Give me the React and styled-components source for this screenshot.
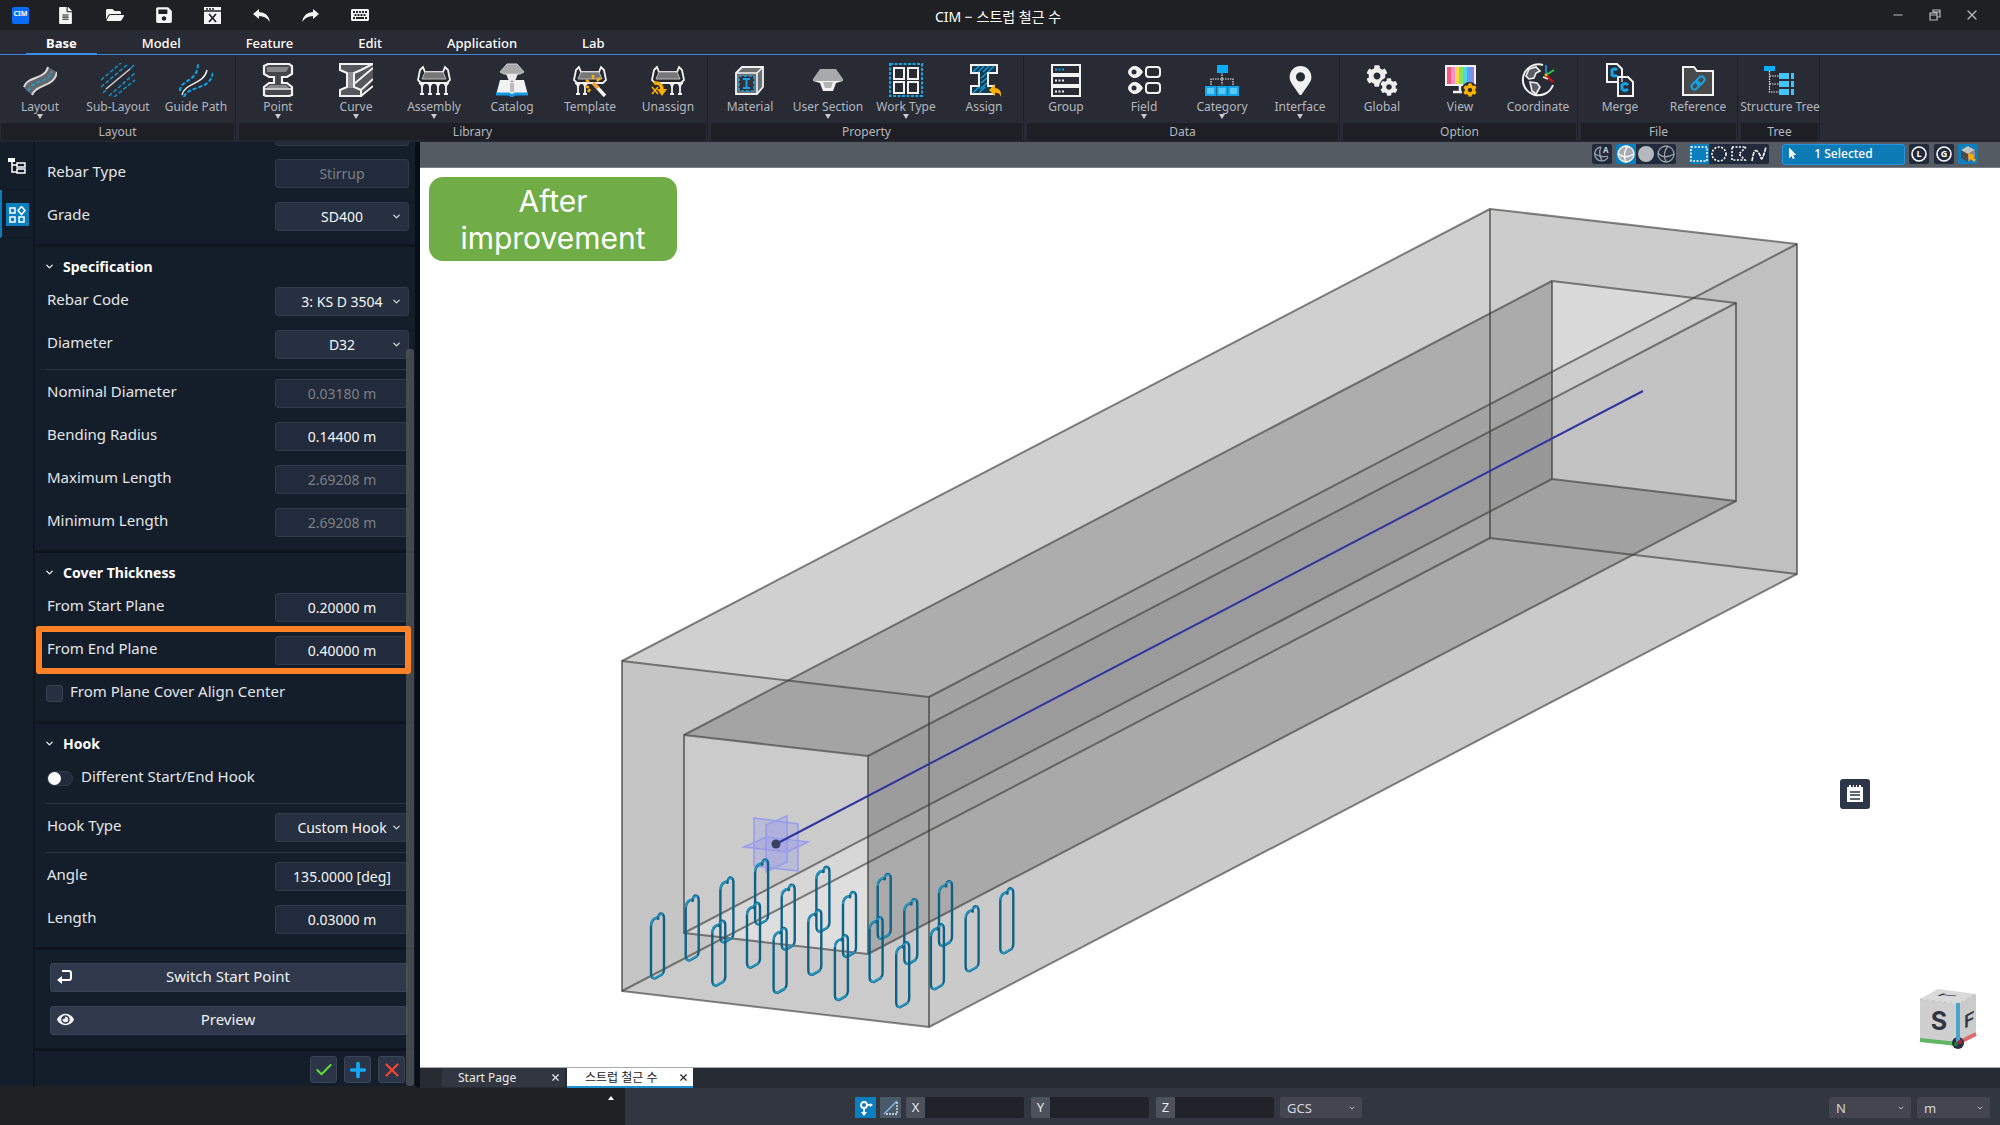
import React from "react";
import styled, { createGlobalStyle, css } from "styled-components";
import {
  FaFileAlt, FaFolderOpen, FaSave, FaKeyboard,
  FaCog, FaMapMarkerAlt, FaEye, FaMousePointer,
} from "react-icons/fa";
import { ChevronDown, X, Check, Plus, Minus } from "lucide-react";

const Global = createGlobalStyle`
  * { box-sizing: border-box; }
  body { margin: 0; background: #202125; }
  body, button, input, select {
    font-family: "Noto Sans", "Noto Sans CJK KR", sans-serif;
  }
  button { border: 0; padding: 0; background: none; color: inherit; cursor: pointer; }
  svg { display: block; flex: none; }
`;

const Page = styled.div`
  display: flex;
  flex-direction: column;
  min-height: 100vh;
  color: #e8eaed;
  font-size: 14px;
`;

/* ---------- title bar ---------- */
const TitleBar = styled.header`
  display: grid;
  grid-template-columns: 1fr auto 1fr;
  align-items: center;
  height: 30px;
  padding: 0 16px 0 12px;
  background: #1f2024;
`;
const QuickBar = styled.div`
  display: flex;
  align-items: center;
  gap: 24px;
`;
const Logo = styled.span`
  width: 17px;
  height: 17px;
  border-radius: 2px;
  background: #0a6cf5;
  color: #fff;
  font-size: 7px;
  font-weight: 700;
  line-height: 13px;
  text-align: center;
`;
const BarButton = styled.button`
  display: flex;
  align-items: center;
  justify-content: center;
  width: 25px;
  height: 24px;
  color: ${(p) => p.$tone || "#f4f4f4"};
`;
const WindowTitle = styled.h1`
  margin: 0;
  font-size: 14px;
  line-height: 20px;
  font-weight: 400;
  color: #fff;
  padding-top: 4px;
`;
const WindowButtons = styled.div`
  display: flex;
  justify-content: flex-end;
  gap: 12px;
`;

/* ---------- menu ---------- */
const Menu = styled.nav`
  display: flex;
  gap: 25px;
  height: 25px;
  padding-left: 26px;
  background: #282b34;
  border-bottom: 1px solid #3a87dc;
`;
const MenuTab = styled.button`
  height: 25px;
  padding: 2px 20px 0;
  font-size: 13px;
  line-height: 20px;
  font-weight: ${(p) => (p.$active ? 700 : 500)};
  color: #fff;
  border-bottom: 2px solid ${(p) => (p.$active ? "#3a8ee8" : "transparent")};
`;

/* ---------- ribbon ---------- */
const Ribbon = styled.div`
  display: flex;
  gap: 4px;
  height: 87px;
  padding: 0 1px;
  background: #282b34;
  border-bottom: 2px solid #23262d;
`;
const RibbonGroup = styled.section`
  display: flex;
  flex-direction: column;
  box-shadow: 2px 0 0 -1px #1d1f26;
`;
const RibbonItems = styled.div`
  display: flex;
  height: 68px;
`;
const RibbonButton = styled.button`
  display: flex;
  flex-direction: column;
  align-items: center;
  width: 78px;
  padding-top: 8px;
  font-size: 12px;
  line-height: 14px;
  color: #b3b7bf;
  white-space: nowrap;
`;
const RibbonLabel = styled.span`
  margin-top: 3px;
`;
const Arrow = styled.span`
  width: 6px;
  height: 5px;
  background: #c8cbd0;
  clip-path: polygon(0 0, 100% 0, 50% 100%);
`;
const RibbonCaption = styled.h2`
  margin: 0 1px 0 0;
  padding-top: 1px;
  background: #1e1f24;
  color: #b3b7bf;
  font-size: 12px;
  line-height: 16px;
  font-weight: 400;
  text-align: center;
`;

/* ---------- work area ---------- */
const Work = styled.main`
  display: flex;
  flex: 1;
`;
const Rail = styled.nav`
  display: flex;
  flex-direction: column;
  width: 35px;
  background: #141e2b;
  border-right: 2px solid #0e151f;
  border-bottom: 2px solid #202125;
`;
const RailButton = styled.button`
  display: flex;
  align-items: center;
  justify-content: center;
  height: 48px;
  padding: 1px 1px 0 0;
  border-left: 2px solid ${(p) => (p.$active ? "#0b7fbd" : "transparent")};
  border-bottom: 1px solid #101824;
`;
const RailTile = styled.span`
  display: flex;
  align-items: center;
  justify-content: center;
  width: 23px;
  height: 23px;
  background: ${(p) => (p.$active ? "#0b7fbd" : "transparent")};
`;
const Panel = styled.aside`
  position: relative;
  display: flex;
  flex-direction: column;
  width: 385px;
  background: #141e2b;
  border-right: 5px solid #080e17;
  border-bottom: 2px solid #202125;
`;
const ScrollThumb = styled.div`
  position: absolute;
  right: 1px;
  top: 207px;
  bottom: 0;
  width: 8px;
  border-radius: 3px;
  background: rgba(84, 85, 87, 0.75);
`;
const Section = styled.section`
  padding-bottom: 6px;
  border-bottom: 3px solid #0e151f;
`;
const SectionTitle = styled.h3`
  display: flex;
  align-items: center;
  gap: 8px;
  height: 33px;
  margin: 0;
  padding: 5px 0 0 9px;
  font-size: 14px;
  font-weight: 700;
  color: #fff;
`;
const Row = styled.div`
  position: relative;
  display: flex;
  align-items: center;
  justify-content: space-between;
  height: 43px;
  padding: 0 6px 0 12px;
`;
const ClippedRow = styled(Row)`
  height: 10px;
  padding-bottom: 6px;
  align-items: flex-end;
  overflow: hidden;
`;
const Highlight = styled.span`
  position: absolute;
  inset: -3px 4px -2px 1px;
  border: 6px solid #ff8126;
  border-radius: 3px;
  pointer-events: none;
  z-index: 2;
`;
const RowLabel = styled.label`
  padding-bottom: 5px;
  font-size: 15px;
  line-height: 20px;
  color: #e3e5e8;
`;
const control = css`
  width: 134px;
  height: 29px;
  padding: 0;
  border: 1px solid #2f3a4b;
  border-radius: 3px;
  background: #222b3b;
  color: #f5f6f7;
  font-size: 14px;
  text-align: center;
`;
const Field = styled.input`
  ${control}
  &:disabled { color: #7b8085; }
`;
const SelectWrap = styled.span`
  position: relative;
  display: flex;
  align-items: center;
  color: #dfe2e6;
  svg { position: absolute; right: 7px; pointer-events: none; }
`;
const Select = styled.select`
  ${control}
  background: #263040;
  appearance: none;
  text-align-last: center;
`;
const Rule = styled.hr`
  height: 1px;
  margin: 3px 5px 2px 10px;
  border: 0;
  background: #2a3443;
`;
const CheckRow = styled(Row)`
  justify-content: flex-start;
  gap: 7px;
  padding-left: 11px;
`;
const CheckBox = styled.input`
  appearance: none;
  width: 17px;
  height: 17px;
  margin: 0;
  border: 1px solid #36404f;
  border-radius: 3px;
  background: #263040;
`;
const Toggle = styled.input`
  appearance: none;
  display: flex;
  width: 26px;
  height: 15px;
  margin: 0 1px;
  border: 1px solid #2f3a4b;
  border-radius: 8px;
  background: #222b3b;
  &::before {
    content: "";
    width: 13px;
    height: 13px;
    border-radius: 50%;
    background: #fff;
  }
`;
const ButtonStack = styled.div`
  display: flex;
  flex-direction: column;
  gap: 14px;
  padding: 13px 7px 13px 15px;
  border-bottom: 3px solid #0e151f;
`;
const WideButton = styled.button`
  display: grid;
  grid-template-columns: 16px 1fr 18px;
  align-items: center;
  height: 29px;
  padding: 0 6px 3px;
  border: 1px solid #38445a;
  border-radius: 3px;
  background: #2f394b;
  font-size: 15px;
  line-height: 20px;
  color: #f0f1f3;
`;
const Actions = styled.div`
  display: flex;
  justify-content: flex-end;
  gap: 7px;
  padding: 5px 10px 3px 0;
`;
const ActionButton = styled.button`
  display: flex;
  align-items: center;
  justify-content: center;
  width: 27px;
  height: 27px;
  border: 1px solid #3a4558;
  border-radius: 3px;
  background: #2b3547;
  color: ${(p) => p.$tone};
`;

/* ---------- viewport ---------- */
const Stage = styled.section`
  display: flex;
  flex-direction: column;
  flex: 1;
  min-width: 0;
`;
const ViewBar = styled.div`
  display: flex;
  justify-content: flex-end;
  height: 26px;
  padding: 2px 22px 3px 0;
  background: #555b63;
  border-bottom: 1px solid #7b8087;
`;
const ToolSet = styled.div`
  display: flex;
  margin-right: ${(p) => p.$gap}px;
  border-radius: 2px;
  overflow: hidden;
  background: #212a3a;
`;
const Tool = styled.button`
  display: flex;
  align-items: center;
  justify-content: center;
  width: 20px;
  height: 20px;
  background: ${(p) => (p.$active ? "#0b7fbd" : "transparent")};
`;
const Selected = styled.button`
  display: grid;
  grid-template-columns: 12px 1fr 12px;
  align-items: center;
  width: 123px;
  height: 21px;
  margin-right: 4px;
  padding: 0 4px 2px;
  border: 1px solid #2495e6;
  border-radius: 3px;
  background: #0d7bb6;
  color: #fff;
  font-size: 12px;
  font-weight: 500;
`;
const Viewport = styled.div`
  position: relative;
  flex: 1;
  background: #fff;
  overflow: hidden;
`;
const Scene = styled.svg`
  position: absolute;
  inset: 0;
  width: 100%;
  height: 100%;
`;
const Badge = styled.div`
  position: absolute;
  left: 9px;
  top: 9px;
  width: 248px;
  padding: 6px 20px 4px;
  border-radius: 14px;
  background: #70ad47;
  color: #fff;
  font-family: Inter, sans-serif;
  font-size: 30px;
  line-height: 37px;
  text-align: center;
`;
const NoteButton = styled.button`
  position: absolute;
  right: 130px;
  top: 611px;
  display: flex;
  align-items: center;
  justify-content: center;
  width: 30px;
  height: 30px;
  border-radius: 3px;
  background: #2b3649;
`;
const NavCube = styled.svg`
  position: absolute;
  right: 22px;
  bottom: 17px;
`;
const DocTabs = styled.div`
  display: flex;
  gap: 2px;
  height: 21px;
  padding-left: 22px;
  background: #272b33;
  border-top: 1px solid #a8abae;
`;
const DocTab = styled.div`
  display: flex;
  align-items: center;
  justify-content: space-between;
  width: ${(p) => (p.$active ? 126 : 123)}px;
  padding: 0 3px 0 ${(p) => (p.$active ? 18 : 16)}px;
  background: ${(p) => (p.$active ? "#fff" : "#313640")};
  color: ${(p) => (p.$active ? "#222" : "#e8eaed")};
  border-bottom: ${(p) => (p.$active ? "2px solid #1c8fcf" : "1px solid #272b33")};
`;
const DocName = styled.button`
  padding-top: 1px;
  font-size: 12px;
  line-height: 16px;
`;
const CloseTab = styled.button`
  display: flex;
  align-items: center;
  justify-content: center;
  width: 14px;
  height: 16px;
`;

/* ---------- status bar ---------- */
const StatusBar = styled.footer`
  display: flex;
  height: 37px;
  background: #313640;
`;
const Message = styled.div`
  display: flex;
  justify-content: flex-end;
  width: 625px;
  padding: 8px 11px 0 0;
  background: #202125;
`;
const UpArrow = styled.button`
  width: 6px;
  height: 4px;
  background: #fff;
  clip-path: polygon(50% 0, 100% 100%, 0 100%);
`;
const StatusItems = styled.div`
  display: flex;
  flex: 1;
  align-items: flex-start;
  padding: 9px 10px 0 230px;
`;
const SnapButton = styled.button`
  display: flex;
  align-items: center;
  justify-content: center;
  width: 21px;
  height: 21px;
  margin-right: 4px;
  background: ${(p) => (p.$active ? "#0b7fbd" : "#4a5b68")};
`;
const Coord = styled.label`
  display: flex;
  margin: 0 6px 0 1px;
  font-size: 13px;
  line-height: 21px;
  text-align: center;
`;
const CoordName = styled.span`
  width: 19px;
  background: #4d515c;
  border-radius: 2px 0 0 2px;
`;
const CoordInput = styled.input`
  width: 99px;
  height: 21px;
  border: 0;
  border-radius: 0 2px 2px 0;
  background: #202329;
  color: #fff;
`;
const Unit = styled.span`
  position: relative;
  display: flex;
  align-items: center;
  margin-left: ${(p) => (p.$gap === "auto" ? "auto" : `${p.$gap}px`)};
  color: #b9bdc4;
  svg { position: absolute; right: 6px; pointer-events: none; }
`;
const UnitSelect = styled.select`
  appearance: none;
  width: ${(p) => p.$width}px;
  height: 21px;
  padding: 0 7px;
  border: 0;
  border-radius: 2px;
  background: #434650;
  color: #d3d6da;
  font-size: 13px;
`;

/* ---------- ribbon drawings ---------- */
const W = "#f2f2f2";
const B = "#12a5ea";
const Icon = ({ children }) => (
  <svg width="34" height="34" viewBox="0 0 34 34" fill="none" stroke={W} strokeWidth="2" aria-hidden="true">
    {children}
  </svg>
);
const IconBox = styled.span`
  display: flex;
  align-items: center;
  justify-content: center;
  width: 34px;
  height: 34px;
  color: #f2f2f2;
`;
const Dish = () => (
  <>
    <path d="M6 4 3 7 1 17 4 20H30L33 17 31 7 28 4 26 9H8Z" fill="#26282e" strokeWidth="1.8" />
    <path d="M8 9H26L29 16H5Z" fill="#777" stroke="#bbb" strokeWidth="1" />
  </>
);
const Legs = ({ xs }) => xs.map((x) => (
  <path key={x} d={`M${x - 3} 20Q${x} 21 ${x} 25V30M${x + 3} 20Q${x} 21 ${x} 25M${x - 2} 31H${x + 2}`} strokeWidth="1.8" />
));
const glyphs = {
  Layout: (
    <Icon>
      <path d="M1 25C4 14 22 17 25 4L34 9C31 24 14 20 9 32Z" fill="#63666b" stroke="none" />
      <path d="M1 24C4 13 22 17 25 4M9 32C14 20 31 25 34 9" stroke="#d9d9d9" />
      <path d="M5 28C10 16 26 21 29 8" stroke="#1aa0d8" strokeWidth="1.6" strokeDasharray="4 2" />
    </Icon>
  ),
  "Sub-Layout": (
    <Icon>
      <path d="M0 17 20 0M0 24 27 1M8 33 34 10M13 34 34 17" stroke="#1291cc" strokeWidth="1.5" strokeDasharray="4 2" />
      <path d="M5 26 29 6" stroke="#c9ccd0" strokeWidth="1.6" />
      <path d="M2 30 5 27M29 6 33 2" stroke="#1291cc" strokeWidth="1.5" />
    </Icon>
  ),
  "Guide Path": (
    <Icon>
      <path d="M1 28C1 16 19 20 19 0M5 34C9 22 32 28 34 9" stroke="#08a8ef" strokeDasharray="4 2" />
      <path d="M3 32C6 19 25 22 28 7" strokeWidth="1.4" />
    </Icon>
  ),
  Point: (
    <Icon>
      <path d="M3 3 7 1H28L31 3V11L26 14H21V20H26L31 24V32L28 33H5L3 32V24L8 20H13V14H8L3 11Z" fill="#44464a" strokeWidth="2.2" />
      <path d="M6 4H28L25 9H6ZM6 24 9 22H25L28 25H6Z" fill="#85878a" stroke="none" />
      <path d="M4 26H30" strokeWidth="1.5" />
    </Icon>
  ),
  Curve: (
    <Icon>
      <path d="M1 1H34V18L22 33H1V27L8 24V10L1 7Z" fill="#55575b" stroke="none" />
      <path d="M34 1H1V7L8 10V24L1 27V33H22V27L15 24V10L22 7 34 1M22 27 34 16M22 33 34 23M15 21 34 5" strokeWidth="2" />
      <path d="M9 9H14V25H9Z" fill="#8c8e91" stroke="none" />
    </Icon>
  ),
  Assembly: <Icon><Dish /><Legs xs={[5, 13, 21, 29]} /></Icon>,
  Catalog: (
    <Icon>
      <path d="M5 9 12 1H22L29 9 25 11H9Z" fill="#a9a9a9" stroke="#d0d0d0" strokeWidth="1" />
      <path d="M11 11H23L20 18H14Z" fill="#e9e9e9" stroke="none" />
      <path d="M1 32 5 17H14L17 19 20 17H29L33 32H20L17 34 14 32Z" fill={W} stroke="none" />
      <path d="M1 31H14L17 33 20 31H33" stroke="#1597e6" strokeWidth="3" />
      <path d="M17 20V29" stroke="#bbb" strokeWidth="4" />
    </Icon>
  ),
  Template: (
    <Icon>
      <Dish /><Legs xs={[5, 12]} />
      <path d="M22 22 32 33" strokeWidth="3.5" />
      <path d="M20 20 25 25" stroke="#ff9d2e" strokeWidth="3.5" />
      <path d="M20 12V16M13 17 16 19M12 24H16M15 29 17 26M27 15 24 18" stroke="#ffb000" strokeWidth="2.5" />
    </Icon>
  ),
  Unassign: (
    <Icon>
      <Dish /><Legs xs={[21, 29]} />
      <path d="M1 24 7 31M7 24 1 31" stroke="#ffb000" strokeWidth="1.6" />
      <path d="M3 20Q11 19 11 27" stroke="#ffb000" strokeWidth="3.5" />
      <path d="M6 26H16L11 33Z" fill="#ffb000" stroke="none" />
    </Icon>
  ),
  Material: (
    <Icon>
      <path d="M3 10 9 4H30V24L24 31H3Z" fill="#6d6f72" strokeWidth="1.8" />
      <path d="M3 10H24V31M24 10 30 4" strokeWidth="1.6" />
      <rect x="6" y="13" width="15" height="15" fill="#303339" stroke={B} strokeWidth="1.6" strokeDasharray="3 2" />
      <path d="M10 16H17M10 25H17M13.5 16V25" stroke={B} strokeWidth="2" />
    </Icon>
  ),
  "User Section": (
    <Icon>
      <path d="M2 16 9 6H25L32 16V18H2Z" fill="#a8a9ab" stroke="none" />
      <path d="M2 18H32L25 20 22 28H12L9 20Z" fill={W} stroke="none" />
      <path d="M12 19H22L20 25H14Z" fill="#b2b3b5" stroke="none" />
    </Icon>
  ),
  "Work Type": (
    <Icon>
      <rect x="1" y="1" width="32" height="32" stroke={B} strokeDasharray="3 1.5" />
      <rect x="5" y="5" width="10" height="11" /><rect x="19" y="5" width="10" height="11" />
      <rect x="5" y="19" width="10" height="11" /><rect x="19" y="19" width="10" height="11" />
    </Icon>
  ),
  Assign: (
    <Icon>
      <path d="M4 2H30V10H21V23H26V31H4V23H12V10H4Z" fill="#153b50" />
      <path d="M6 9 12 3M11 9 17 3M16 9 22 3M21 9 27 3M14 15 20 10M14 20 20 15M13 26 20 20M6 30 12 24M12 30 18 24" stroke={B} strokeWidth="1.3" />
      <path d="M22 27 28 21V25Q35 26 34 34Q32 29 28 30V33Z" fill="#ffb000" stroke="none" />
    </Icon>
  ),
  Group: (
    <Icon>
      {[2, 13, 24].map((y) => (
        <React.Fragment key={y}>
          <rect x="3" y={y} width="28" height="9" />
          <path d={`M6 ${y + 4.5}h9`} stroke={y === 2 ? B : W} strokeDasharray="2 1.5" />
        </React.Fragment>
      ))}
    </Icon>
  ),
  Field: (
    <Icon>
      {[9, 25].map((y) => (
        <React.Fragment key={y}>
          <path d={`M6 ${y - 6}H9Q13 ${y - 5} 16 ${y}Q13 ${y + 5} 9 ${y + 6}H6Q1 ${y + 3} 1 ${y}Q1 ${y - 3} 6 ${y - 6}Z`} fill={W} stroke="none" />
          <circle cx="7" cy={y} r="2.5" fill="#282b34" stroke="none" />
          <rect x="19" y={y - 5} width="14" height="10" rx="3" />
        </React.Fragment>
      ))}
    </Icon>
  ),
  Category: (
    <Icon>
      <path d="M17 9V22M6 22V16H28V22" strokeWidth="1.2" strokeDasharray="1.5 1" />
      <rect x="12" y="2" width="11" height="8" fill="#08aeff" stroke="none" />
      {[1, 12.5, 24].map((x) => <rect key={x} x={x} y="24" width="9" height="8" fill="#59c9f5" stroke={B} />)}
    </Icon>
  ),
  Interface: <IconBox><FaMapMarkerAlt size={29} /></IconBox>,
  Global: (
    <Icon>
      <FaCog x="1" y="2" size={22} color="#eee" stroke="none" />
      <circle cx="24" cy="24" r="10" fill="#282b34" stroke="none" />
      <FaCog x="15" y="15" size={18} color="#eee" stroke="none" />
    </Icon>
  ),
  View: (
    <Icon>
      {["#f4597a", "#f58fd0", "#f9d84a", "#8de05a", "#4fd9e8", "#6a9bf2", "#9a80e8"].map((c, i) => (
        <rect key={c} x={4 + i * 4} y="4" width="4" height="17" fill={c} stroke="none" />
      ))}
      <rect x="3" y="3" width="29" height="19" />
      <path d="M17 22V28M10 29H20" strokeWidth="2.5" />
      <circle cx="26.5" cy="27" r="8" fill="#282b34" stroke="none" />
      <FaCog x="20" y="20" size={14} color="#ffb000" stroke="none" />
    </Icon>
  ),
  Coordinate: (
    <Icon>
      <path d="M22 2A15.5 15.5 0 1 0 32 22" />
      <path d="M8 6 15 4 19 8 15 10 13 15 8 16 5 13ZM9 19 16 20 19 24 15 31 11 28ZM22 14 27 16" fill={W} fillOpacity="0.25" strokeWidth="1.6" />
      <path d="M25 12V2" stroke={B} strokeWidth="1.6" /><path d="M25 12 33 7" stroke="#2ecc40" strokeWidth="1.8" />
      <path d="M25 12 32 19" stroke="#e01010" strokeWidth="2" /><circle cx="25" cy="12" r="1.5" fill="#ffb000" stroke="none" />
    </Icon>
  ),
  Merge: (
    <Icon>
      <path d="M4 1H14L19 6V19H4Z" /><path d="M15 14H25L30 19V33H15Z" fill="#282b34" />
      <path d="M14 7Q12 5 9 7V12Q12 14 14 12M25 22Q22 19 19 22V26Q22 29 25 26" stroke={B} strokeWidth="3" />
      <path d="M14 14H19V19" strokeWidth="1.2" />
    </Icon>
  ),
  Reference: (
    <Icon>
      <path d="M2 4H13L16 8H32V32H2Z" fill="#4a4a4b" />
      <g transform="rotate(-45 17 20)" stroke={B}><rect x="9" y="17" width="9" height="6" rx="3" /><rect x="16" y="17" width="9" height="6" rx="3" /></g>
    </Icon>
  ),
  "Structure Tree": (
    <Icon>
      <rect x="1" y="3" width="11" height="5" fill="#08aeff" stroke="none" />
      <path d="M6.5 8V29H16M6.5 13H16M6.5 21H16" strokeWidth="1.2" strokeDasharray="1.5 1" />
      {[10, 18, 26].map((y) => (
        <React.Fragment key={y}>
          <rect x="16" y={y} width="10" height="6" fill="#41c4f8" stroke="none" />
          <rect x="28" y={y} width="3" height="6" fill="#41c4f8" stroke="none" />
        </React.Fragment>
      ))}
    </Icon>
  ),
};

const ribbon = [
  ["Layout", ["Layout", "Sub-Layout", "Guide Path"]],
  ["Library", ["Point", "Curve", "Assembly", "Catalog", "Template", "Unassign"]],
  ["Property", ["Material", "User Section", "Work Type", "Assign"]],
  ["Data", ["Group", "Field", "Category", "Interface"]],
  ["Option", ["Global", "View", "Coordinate"]],
  ["File", ["Merge", "Reference"]],
  ["Tree", ["Structure Tree"]],
];
const withMenu = ["Layout", "Point", "Curve", "Assembly", "User Section", "Work Type", "Field", "Category", "Interface"];

/* ---------- model drawing ---------- */
const front = [[622, 661], [929, 697], [929, 1027], [622, 991]];
const back = [[1490, 209], [1797, 244], [1797, 574], [1490, 538]];
const holeFront = [[684, 735], [868, 756], [868, 954], [684, 933]];
const holeBack = [[1552, 281], [1736, 303], [1736, 501], [1552, 479]];
const pathOf = (pts) => `M${pts.map((p) => p.join(" ")).join("L")}Z`;
const side = (a, b, i) => pathOf([a[i], a[(i + 1) % 4], b[(i + 1) % 4], b[i]]);
// Opacity of the top, right, bottom and left walls.
const outerShade = [0.07, 0.13, 0.09, 0.125];
const innerShade = [0.08, 0.13, 0.04, 0.09];

const bars = [];
for (let r = 0; r < 5; r += 1) {
  for (let c = 0; c < 4; c += 1) {
    bars.push([661 + r * 61.3 + c * 34.7, 913.5 + r * 7.2 - c * 18]);
  }
}
const barPath = "M-4 5Q-2 6-3 4Q-10 5-10 13V60Q-10 65-6 65L1 61Q3 59 3 56V5Q3 0 0 0Q-2 0-3 4";

const Model = () => (
  <Scene viewBox="420 168 1580 899" preserveAspectRatio="xMidYMid meet" role="img" aria-label="Hollow box girder with stirrups">
    <g fill="#040404" fillRule="evenodd">
      <path d={pathOf(front) + pathOf(holeFront)} opacity="0.125" />
      <path d={pathOf(back) + pathOf(holeBack)} opacity="0.14" />
      {outerShade.map((o, i) => <path key={i} d={side(front, back, i)} opacity={o} />)}
      {innerShade.map((o, i) => <path key={i} d={side(holeFront, holeBack, i)} opacity={o} />)}
    </g>
    <g fill="none" stroke="#3a3a38" strokeOpacity="0.62" strokeWidth="2" strokeLinejoin="round">
      {[front, back, holeFront, holeBack].map((f, i) => <path key={i} d={pathOf(f)} />)}
      {front.map((p, i) => <path key={i} d={`M${p}L${back[i]}`} />)}
      {holeFront.map((p, i) => <path key={i} d={`M${p}L${holeBack[i]}`} />)}
    </g>
    <g fill="#9599ea" fillOpacity="0.3" stroke="#989cec" strokeWidth="1.5">
      <path d="M754 818L798 824V871L754 866Z" />
      <path d="M766 825L787 816V862L766 872Z" />
      <path d="M744 847L767 837L808 842L787 852Z" />
    </g>
    <path d="M776 844L1643 391" stroke="#2f34a0" strokeWidth="2" />
    <circle cx="776" cy="844" r="4.5" fill="#3a4060" />
    <g fill="none" strokeLinejoin="round">
      {bars.map(([x, y]) => (
        <g key={`${x}-${y}`} transform={`translate(${x} ${y})`}>
          <path d={barPath} stroke="#0f6286" strokeWidth="2.4" />
          <path d="M-10 12Q-10 5-4 4M-3 3Q-1 0 2 1M-9 63Q-7 66-5 64L2 60" stroke="#2497c4" strokeWidth="1.8" />
        </g>
      ))}
    </g>
  </Scene>
);

const Orbit = ({ bright }) => (
  <svg width="18" height="18" viewBox="0 0 18 18" fill={bright ? "#a9adb3" : "none"} stroke={bright ? "#fff" : "#9ba0a8"} strokeWidth="1.3">
    <circle cx="9" cy="9" r="8" /><path d="M1 8Q7 15 17 9M11 1Q5 8 9 17" fill="none" />
  </svg>
);
const Marker = ({ children }) => (
  <svg width="18" height="18" viewBox="0 0 18 18" fill="none" stroke="#fff" strokeWidth="1.6" strokeDasharray="2 1.5">{children}</svg>
);
const Ring = ({ letter }) => (
  <svg width="18" height="18" viewBox="0 0 18 18">
    <circle cx="9" cy="9" r="7" fill="none" stroke="#fff" strokeWidth="1.6" />
    <text x="9" y="12" fontSize="9" fontWeight="700" fill="#fff" textAnchor="middle">{letter}</text>
  </svg>
);

const ValueRow = ({ label, value, disabled, marked }) => {
  const id = label.replace(/ /g, "-");
  return (
    <Row>
      <RowLabel htmlFor={id}>{label}</RowLabel>
      <Field id={id} defaultValue={value} disabled={disabled} />
      {marked && <Highlight />}
    </Row>
  );
};
const ChoiceRow = ({ label, value }) => {
  const id = label.replace(/ /g, "-");
  return (
    <Row>
      <RowLabel htmlFor={id}>{label}</RowLabel>
      <SelectWrap>
        <Select id={id} defaultValue={value}><option>{value}</option></Select>
        <ChevronDown size={11} strokeWidth={2.5} />
      </SelectWrap>
    </Row>
  );
};
const Heading = ({ children }) => (
  <SectionTitle><ChevronDown size={11} strokeWidth={2.5} />{children}</SectionTitle>
);
const UnitBox = ({ label, value, width, gap }) => (
  <Unit $gap={gap}>
    <UnitSelect aria-label={label} $width={width} defaultValue={value}><option>{value}</option></UnitSelect>
    <ChevronDown size={8} strokeWidth={3} />
  </Unit>
);

export default function App() {
  return (
    <Page>
      <Global />
      <TitleBar>
        <QuickBar>
          <Logo>CIM</Logo>
          <BarButton aria-label="New"><FaFileAlt size={17} /></BarButton>
          <BarButton aria-label="Open"><FaFolderOpen size={18} /></BarButton>
          <BarButton aria-label="Save"><FaSave size={18} /></BarButton>
          <BarButton aria-label="Close file">
            <svg width="17" height="17" viewBox="0 0 17 17">
              <path d="M0 0H17V17H0Z" fill="#f4f4f4" />
              <path d="M0 4H17M2 2H4M5 2H7M8 2H10M5 7 12 15M12 7 5 15" stroke="#1f2024" strokeWidth="1.7" />
            </svg>
          </BarButton>
          <BarButton aria-label="Undo">
            <svg width="17" height="13" viewBox="0 0 17 13"><path d="M0 5 6 0V3Q15 3 17 13Q13 7 6 7V10Z" fill="#f4f4f4" /></svg>
          </BarButton>
          <BarButton aria-label="Redo">
            <svg width="17" height="13" viewBox="0 0 17 13"><path d="M17 5 11 0V3Q2 3 0 13Q4 7 11 7V10Z" fill="#f4f4f4" /></svg>
          </BarButton>
          <BarButton aria-label="Shortcuts"><FaKeyboard size={18} /></BarButton>
        </QuickBar>
        <WindowTitle>CIM − 스트럽 철근 수</WindowTitle>
        <WindowButtons>
          <BarButton aria-label="Minimize" $tone="#b8bbc0"><Minus size={14} strokeWidth={2} /></BarButton>
          <BarButton aria-label="Restore" $tone="#b8bbc0">
            <svg width="12" height="12" viewBox="0 0 12 12" fill="none" stroke="currentColor" strokeWidth="1.2">
              <path d="M1 4H8V11H1ZM1 6H8M4 4V1H11V8H8M4 3H11" />
            </svg>
          </BarButton>
          <BarButton aria-label="Close" $tone="#b8bbc0"><X size={16} strokeWidth={1.8} /></BarButton>
        </WindowButtons>
      </TitleBar>

      <Menu>
        {["Base", "Model", "Feature", "Edit", "Application", "Lab"].map((t) => (
          <MenuTab key={t} $active={t === "Base"}>{t}</MenuTab>
        ))}
      </Menu>

      <Ribbon>
        {ribbon.map(([name, items]) => (
          <RibbonGroup key={name}>
            <RibbonItems>
              {items.map((item) => (
                <RibbonButton key={item}>
                  {glyphs[item]}
                  <RibbonLabel>{item}</RibbonLabel>
                  {withMenu.includes(item) && <Arrow />}
                </RibbonButton>
              ))}
            </RibbonItems>
            <RibbonCaption>{name}</RibbonCaption>
          </RibbonGroup>
        ))}
      </Ribbon>

      <Work>
        <Rail>
          <RailButton aria-label="Tree">
            <RailTile>
              <svg width="18" height="18" viewBox="0 0 18 18" fill="none" stroke="#fff" strokeWidth="1.5">
                <path d="M0 1H7V5H0Z" fill="#fff" stroke="none" />
                <path d="M4 5V15H9M4 8H9M9 6H17V10H9ZM9 12H17V16H9Z" />
              </svg>
            </RailTile>
          </RailButton>
          <RailButton aria-label="Properties" $active>
            <RailTile $active>
              <svg width="17" height="17" viewBox="0 0 17 17" fill="none" stroke="#fff" strokeWidth="1.5">
                <path d="M1 2H6V7H1ZM1 11H6V16H1ZM10 11H15V16H10ZM12.5 0.5 16 4.5 12.5 8.5 9 4.5Z" />
              </svg>
            </RailTile>
          </RailButton>
        </Rail>

        <Panel>
          <Section>
            <ClippedRow><span /><Field aria-label="Name" /></ClippedRow>
            <ValueRow label="Rebar Type" value="Stirrup" disabled />
            <ChoiceRow label="Grade" value="SD400" />
          </Section>
          <Section>
            <Heading>Specification</Heading>
            <ChoiceRow label="Rebar Code" value="3: KS D 3504" />
            <ChoiceRow label="Diameter" value="D32" />
            <Rule />
            <ValueRow label="Nominal Diameter" value="0.03180 m" disabled />
            <ValueRow label="Bending Radius" value="0.14400 m" />
            <ValueRow label="Maximum Length" value="2.69208 m" disabled />
            <ValueRow label="Minimum Length" value="2.69208 m" disabled />
          </Section>
          <Section>
            <Heading>Cover Thickness</Heading>
            <ValueRow label="From Start Plane" value="0.20000 m" />
            <ValueRow label="From End Plane" value="0.40000 m" marked />
            <CheckRow>
              <CheckBox id="align-center" type="checkbox" />
              <RowLabel htmlFor="align-center">From Plane Cover Align Center</RowLabel>
            </CheckRow>
          </Section>
          <Section>
            <Heading>Hook</Heading>
            <CheckRow>
              <Toggle id="different-hook" type="checkbox" role="switch" />
              <RowLabel htmlFor="different-hook">Different Start/End Hook</RowLabel>
            </CheckRow>
            <Rule />
            <ChoiceRow label="Hook Type" value="Custom Hook" />
            <Rule />
            <ValueRow label="Angle" value="135.0000 [deg]" />
            <ValueRow label="Length" value="0.03000 m" />
          </Section>
          <ButtonStack>
            <WideButton>
              <svg width="16" height="16" viewBox="0 0 16 16" fill="none" stroke="#fff" strokeWidth="2">
                <path d="M5 3H12Q14 3 14 5V10Q14 12 12 12H4" /><path d="M5 8V16L0 12Z" fill="#fff" stroke="none" />
              </svg>
              <span>Switch Start Point</span>
            </WideButton>
            <WideButton><FaEye size={17} /><span>Preview</span></WideButton>
          </ButtonStack>
          <Actions>
            <ActionButton aria-label="Apply" $tone="#5fd83c"><Check size={20} strokeWidth={2.5} /></ActionButton>
            <ActionButton aria-label="Add" $tone="#12a8f5"><Plus size={22} strokeWidth={4} /></ActionButton>
            <ActionButton aria-label="Cancel" $tone="#f2452e"><X size={22} strokeWidth={2.5} /></ActionButton>
          </Actions>
          <ScrollThumb />
        </Panel>

        <Stage>
          <ViewBar>
            <ToolSet $gap={4}>
              <Tool aria-label="Auto shading">
                <svg width="18" height="18" viewBox="0 0 18 18" fill="none" stroke="#9ba0a8" strokeWidth="1.3">
                  <path d="M8 2A7 7 0 1 0 15 12M2 9Q8 13 15 11M8 2Q5 8 9 16" />
                  <text x="10" y="8" fontSize="8" fontWeight="700" fill="#c8ccd2" stroke="none">A</text>
                </svg>
              </Tool>
            </ToolSet>
            <ToolSet $gap={13}>
              <Tool aria-label="Shaded" $active><Orbit bright /></Tool>
              <Tool aria-label="Flat"><svg width="18" height="18"><circle cx="9" cy="9" r="8" fill="#b5b8bd" /></svg></Tool>
              <Tool aria-label="Wireframe"><Orbit /></Tool>
            </ToolSet>
            <ToolSet $gap={13}>
              <Tool aria-label="Box select" $active><Marker><path d="M1 2H17V16H1Z" /></Marker></Tool>
              <Tool aria-label="Circle select"><Marker><circle cx="9" cy="9" r="7" /></Marker></Tool>
              <Tool aria-label="Polygon select"><Marker><path d="M2 2H16L9 9 15 15H2Z" /></Marker></Tool>
              <Tool aria-label="Line select"><Marker><path d="M2 16Q4 3 7 6T11 13T16 2" strokeDasharray="4 1" /></Marker></Tool>
            </ToolSet>
            <Selected><FaMousePointer size={11} /><span>1 Selected</span></Selected>
            <ToolSet $gap={5}><Tool aria-label="Local"><Ring letter="L" /></Tool></ToolSet>
            <ToolSet $gap={4}><Tool aria-label="Global axis"><Ring letter="G" /></Tool></ToolSet>
            <ToolSet $gap={0}>
              <Tool aria-label="Pick solid" $active>
                <svg width="18" height="18" viewBox="0 0 18 18">
                  <path d="M9 1 16 5V13L9 17 2 13V5Z" fill="#4b4b4b" /><path d="M9 1 16 5 9 9 2 5Z" fill="#c4c4c4" />
                  <path d="M9 9 16 5V13L9 17Z" fill="#8c8c8c" /><path d="M9 8 15 10 14 12 17 15 15 17 12 14 10 15Z" fill="#ffb000" />
                </svg>
              </Tool>
            </ToolSet>
          </ViewBar>

          <Viewport>
            <Model />
            <Badge>After improvement</Badge>
            <NoteButton aria-label="Notes">
              <svg width="18" height="18" viewBox="0 0 18 18">
                <path d="M1 2H3V0H5V2H7V0H8V2H10V0H11V2H13V0H15V2H17V17H1Z" fill="#fff" />
                <path d="M4 7H14M4 10H14M4 14H14" stroke="#2b3649" strokeWidth="1.3" />
              </svg>
            </NoteButton>
            <NavCube width="60" height="64" viewBox="0 0 60 64">
              <path d="M2 13 20 3 58 8 40 18Z" fill="#dadada" />
              <path d="M2 13 40 18V61L2 53Z" fill="#cfcfcf" />
              <path d="M40 18 58 8V48L40 58Z" fill="#cbcbcb" />
              <path d="M2 13 40 18 58 8" fill="none" stroke="#bfbfbf" strokeDasharray="3 3" />
              <text x="21" y="44" fontFamily="Inter, sans-serif" fontWeight="700" fontSize="25" fill="#2f3542" textAnchor="middle">S</text>
              <text transform="translate(46 43) skewY(-28)" fontFamily="Inter, sans-serif" fontWeight="600" fontSize="18" fill="#2f3542">F</text>
              <text transform="translate(38 10) rotate(-22) skewX(63)" fontFamily="Inter, sans-serif" fontWeight="700" fontSize="10" fill="#2f3542" textAnchor="middle">T</text>
              <path d="M2 54 40 58" stroke="#5fb763" strokeWidth="4" />
              <path d="M40 57 58 48" stroke="#dd6a6e" strokeWidth="4" />
              <circle cx="40" cy="57" r="6" fill="#26303f" />
              <path d="M40 17V56" stroke="#4aa3cc" strokeWidth="4" />
              <path d="M36 58 40 58" stroke="#1f7a35" strokeWidth="4" /><path d="M40 57 44 55" stroke="#9c2b3a" strokeWidth="4" />
            </NavCube>
          </Viewport>

          <DocTabs>
            <DocTab>
              <DocName>Start Page</DocName>
              <CloseTab aria-label="Close Start Page"><X size={11} strokeWidth={2.5} /></CloseTab>
            </DocTab>
            <DocTab $active>
              <DocName>스트럽 철근 수</DocName>
              <CloseTab aria-label="Close document"><X size={11} strokeWidth={2.5} /></CloseTab>
            </DocTab>
          </DocTabs>
        </Stage>
      </Work>

      <StatusBar>
        <Message><UpArrow aria-label="Show messages" /></Message>
        <StatusItems>
          <SnapButton aria-label="Point snap" $active>
            <svg width="16" height="16" viewBox="0 0 16 16" fill="none" stroke="#fff" strokeWidth="1.8">
              <circle cx="6" cy="5" r="3" /><path d="M6 8V13M9 5H13" /><path d="M3 12 6 16 9 12ZM12 3 15 5 12 7Z" fill="#fff" stroke="none" />
            </svg>
          </SnapButton>
          <SnapButton aria-label="Angle snap">
            <svg width="16" height="16" viewBox="0 0 16 16" fill="none">
              <path d="M1 14 14 1" stroke="#7fb2f0" strokeWidth="1.6" />
              <path d="M14 2V14H2" stroke="#e8eaed" strokeWidth="1.3" strokeDasharray="2 1" />
            </svg>
          </SnapButton>
          {["X", "Y", "Z"].map((axis) => (
            <Coord key={axis}><CoordName>{axis}</CoordName><CoordInput /></Coord>
          ))}
          <UnitBox label="Coordinate system" value="GCS" width={82} gap={0} />
          <UnitBox label="Force unit" value="N" width={82} gap="auto" />
          <UnitBox label="Length unit" value="m" width={73} gap={6} />
        </StatusItems>
      </StatusBar>
    </Page>
  );
}
